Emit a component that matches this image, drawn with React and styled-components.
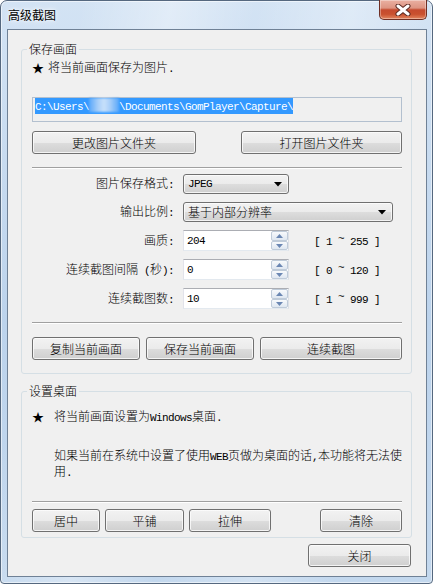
import React from 'react';
import styled, { createGlobalStyle } from 'styled-components';

const Global = createGlobalStyle`
  html, body { margin: 0; padding: 0; background: #ffffff; }
  body {
    font-family: "Noto Sans CJK SC", "Noto Sans", sans-serif;
    font-size: 12px;
    font-weight: 300;
    color: #000;
  }
  * { box-sizing: border-box; }
`;

const Window = styled.div`
  width: 433px;
  height: 584px;
  display: flex;
  flex-direction: column;
  padding: 0 5px 6px 6px;
  border: 1px solid #55687f;
  border-radius: 7px 7px 4px 4px;
  background:
    linear-gradient(100deg, rgba(255,255,255,0) 15%, rgba(255,255,255,0.35) 32%, rgba(255,255,255,0) 48%, rgba(255,255,255,0.28) 66%, rgba(255,255,255,0) 82%),
    linear-gradient(180deg, #d3e3f4 0%, #bcd3ec 55%, #c3d8ee 100%);
  box-shadow: inset 0 0 0 1px rgba(255,255,255,0.55);
`;

const TitleBar = styled.div`
  height: 28px;
  display: flex;
  align-items: flex-start;
`;

const Title = styled.span`
  margin: 7px 0 0 1px;
  line-height: 13px;
  font-size: 12px;
  font-weight: 400;
  text-shadow: 0 0 6px rgba(255,255,255,0.95), 0 0 3px rgba(255,255,255,0.9);
`;

const CloseButton = styled.div`
  margin: -1px 0 0 auto;
  width: 48px;
  height: 20px;
  display: flex;
  align-items: center;
  justify-content: center;
  border: 1px solid #6e2f24;
  border-top: none;
  border-radius: 0 0 5px 5px;
  background: linear-gradient(180deg, #eab0a2 0%, #dd9482 42%, #c54b2f 52%, #c9512f 75%, #e28660 100%);
  box-shadow: inset 0 0 0 1px rgba(255,255,255,0.35);
`;

const Client = styled.div`
  flex: 1;
  display: flex;
  flex-direction: column;
  padding: 13px 14px 0 13px;
  border: 1px solid #6f8196;
  background: #f0f0f0;
`;

const Group = styled.fieldset`
  margin: ${p => p.$mt || 0}px 0 0 0;
  padding: 0;
  border: 1px solid #d5dfe5;
  border-radius: 3px;
  min-width: 0;
`;

const Legend = styled.legend`
  margin-left: 5px;
  padding: 0 2px;
  line-height: 12px;
  font-size: 12px;
`;

const GroupBody = styled.div`
  display: flex;
  flex-direction: column;
  padding: ${p => p.$pt}px 9px ${p => p.$pb}px 10px;
`;

const Lt = styled.span`
  font-family: "Liberation Mono", monospace;
  font-size: 11px;
  font-weight: 400;
  letter-spacing: -0.6px;
`;

const StarRow = styled.div`
  display: flex;
  align-items: center;
  height: 12px;
  line-height: 12px;
  gap: ${p => p.$gap}px;
`;

const Star = styled.span`
  font-size: 12px;
  width: 12px;
  text-align: center;
`;

const PathBox = styled.div`
  margin-top: 23px;
  height: 25px;
  padding: 0 2px;
  border: 1px solid #b3c0cf;
  background: #f0f0f0;
  line-height: 14px;
`;

const Selection = styled.span`
  display: inline-block;
  background: #3399ff;
  color: #fff;
  line-height: 14px;
  white-space: nowrap;
`;

const Blurred = styled.span`
  display: inline-block;
  width: 30px;
  height: 14px;
  vertical-align: top;
  background: linear-gradient(90deg, #59a7fa 0%, #a8cff9 30%, #c9e1fb 50%, #a8cff9 70%, #59a7fa 100%);
  filter: blur(0.8px);
`;

const ButtonRow = styled.div`
  display: flex;
  margin-top: ${p => p.$mt}px;
  gap: ${p => p.$gap || 0}px;
  justify-content: ${p => p.$justify || 'flex-start'};
`;

const Button = styled.button`
  width: ${p => (p.$w ? `${p.$w}px` : 'auto')};
  flex: ${p => (p.$grow ? 1 : 'none')};
  margin-left: ${p => (p.$push ? 'auto' : '0')};
  margin-right: ${p => p.$mr || 0}px;
  height: 23px;
  padding: 0;
  font-family: "Noto Sans CJK SC", sans-serif;
  font-size: 12px;
  font-weight: 300;
  line-height: 12px;
  color: #000;
  border: 1px solid #707070;
  border-radius: 3px;
  background: linear-gradient(180deg, #f2f2f2 0%, #ebebeb 50%, #dddddd 51%, #cfcfcf 100%);
  box-shadow: inset 0 0 0 1px rgba(252,252,252,0.8);
`;

const Separator = styled.div`
  margin-top: ${p => p.$mt}px;
  height: 2px;
  border-top: 1px solid #a0a0a0;
  border-bottom: 1px solid #ffffff;
`;

const Form = styled.div`
  margin-top: 5px;
  display: flex;
  flex-direction: column;
  gap: 8px;
`;

const FormRow = styled.div`
  display: flex;
  align-items: center;
`;

const FieldLabel = styled.span`
  width: 142px;
  margin-right: 9px;
  text-align: right;
  white-space: nowrap;
  line-height: 12px;
`;

const Combo = styled.div`
  width: ${p => p.$w}px;
  height: 20px;
  display: flex;
  align-items: center;
  justify-content: space-between;
  padding: 0 6px 0 4px;
  border: 1px solid #707070;
  border-radius: 3px;
  background: linear-gradient(180deg, #f2f2f2 0%, #ebebeb 50%, #dddddd 51%, #cfcfcf 100%);
  box-shadow: inset 0 0 0 1px rgba(252,252,252,0.8);
  line-height: 12px;
`;

const SpinEdit = styled.div`
  width: 106px;
  height: 21px;
  display: flex;
  border: 1px solid;
  border-color: #abadb3 #dbdfe6 #e3e9ef #e2e3ea;
  background: #ffffff;
`;

const SpinValue = styled.span`
  flex: 1;
  padding: 2px 0 0 3px;
  line-height: 12px;
`;

const SpinButtons = styled.div`
  width: 17px;
  display: flex;
  flex-direction: column;
`;

const SpinHalf = styled.div`
  height: ${p => p.$h}px;
  display: flex;
  align-items: center;
  justify-content: center;
  border: 1px solid #bfcbd9;
  border-radius: 2px;
  background: linear-gradient(180deg, #f8fafc 0%, #ebf0f6 50%, #dfe7f1 100%);
`;

const RangeText = styled.span`
  margin-left: 25px;
  line-height: 12px;
`;

const Tilde = styled.span`
  vertical-align: 3px;
`;

const Paragraph = styled.p`
  margin: 25px 0 0 22px;
  width: 352px;
  line-height: 14px;
`;

const CloseRow = styled.div`
  display: flex;
  justify-content: flex-end;
  margin-top: 6px;
`;

const Arrow = () => (
  <svg width="8" height="5" viewBox="0 0 8 5">
    <polygon points="0,0 8,0 4,4.5" fill="#000" />
  </svg>
);

const SpinArrow = ({ up }) => (
  <svg width="7" height="4" viewBox="0 0 7 4">
    <polygon points={up ? '0,4 7,4 3.5,0' : '0,0 7,0 3.5,4'} fill="#6b87b3" />
  </svg>
);

const CloseX = () => (
  <svg width="16" height="12" viewBox="0 0 16 12">
    <path d="M3 2 L13 10 M13 2 L3 10" stroke="#5a2a22" strokeWidth="5" strokeLinecap="round" />
    <path d="M3 2 L13 10 M13 2 L3 10" stroke="#ffffff" strokeWidth="3" strokeLinecap="round" />
  </svg>
);

const Colon = () => <Lt>:</Lt>;

const Spin = ({ value }) => (
  <SpinEdit>
    <SpinValue><Lt>{value}</Lt></SpinValue>
    <SpinButtons>
      <SpinHalf $h={10}><SpinArrow up /></SpinHalf>
      <SpinHalf $h={9}><SpinArrow /></SpinHalf>
    </SpinButtons>
  </SpinEdit>
);

const Range = ({ from, to }) => (
  <RangeText>
    <Lt>[ {from} <Tilde>~</Tilde> {to} ]</Lt>
  </RangeText>
);

export default function App() {
  return (
    <>
      <Global />
      <Window>
        <TitleBar>
          <Title>高级截图</Title>
          <CloseButton><CloseX /></CloseButton>
        </TitleBar>
        <Client>
          <Group>
            <Legend>保存画面</Legend>
            <GroupBody $pt={7} $pb={13}>
              <StarRow $gap={4}>
                <Star>★</Star>
                <span>将当前画面保存为图片<Lt>.</Lt></span>
              </StarRow>
              <PathBox>
                <Selection>
                  <Lt>C:\Users\</Lt>
                  <Blurred />
                  <Lt>\Documents\GomPlayer\Capture\</Lt>
                </Selection>
              </PathBox>
              <ButtonRow $mt={9} $justify="space-between">
                <Button $w={164}>更改图片文件夹</Button>
                <Button $w={161}>打开图片文件夹</Button>
              </ButtonRow>
              <Separator $mt={13} />
              <Form>
                <FormRow>
                  <FieldLabel>图片保存格式<Colon /></FieldLabel>
                  <Combo $w={106}><Lt>JPEG</Lt><Arrow /></Combo>
                </FormRow>
                <FormRow>
                  <FieldLabel>输出比例<Colon /></FieldLabel>
                  <Combo $w={210}><span>基于内部分辨率</span><Arrow /></Combo>
                </FormRow>
                <FormRow>
                  <FieldLabel>画质<Colon /></FieldLabel>
                  <Spin value="204" />
                  <Range from="1" to="255" />
                </FormRow>
                <FormRow>
                  <FieldLabel>连续截图间隔<Lt> (</Lt>秒<Lt>):</Lt></FieldLabel>
                  <Spin value="0" />
                  <Range from="0" to="120" />
                </FormRow>
                <FormRow>
                  <FieldLabel>连续截图数<Colon /></FieldLabel>
                  <Spin value="10" />
                  <Range from="1" to="999" />
                </FormRow>
              </Form>
              <Separator $mt={13} />
              <ButtonRow $mt={13} $gap={6}>
                <Button $w={108}>复制当前画面</Button>
                <Button $w={108}>保存当前画面</Button>
                <Button $grow>连续截图</Button>
              </ButtonRow>
            </GroupBody>
          </Group>
          <Group $mt={11}>
            <Legend>设置桌面</Legend>
            <GroupBody $pt={14} $pb={5}>
              <StarRow $gap={10}>
                <Star>★</Star>
                <span>将当前画面设置为<Lt>Windows</Lt>桌面<Lt>.</Lt></span>
              </StarRow>
              <Paragraph>
                如果当前在系统中设置了使用<Lt>WEB</Lt>页做为桌面的话<Lt>,</Lt>本功能将无法使用<Lt>.</Lt>
              </Paragraph>
              <Separator $mt={21} />
              <ButtonRow $mt={6} $gap={5}>
                <Button $w={68}>居中</Button>
                <Button $w={79}>平铺</Button>
                <Button $w={82}>拉伸</Button>
                <Button $w={82} $push>清除</Button>
              </ButtonRow>
            </GroupBody>
          </Group>
          <CloseRow>
            <Button $w={103} $mr={1}>关闭</Button>
          </CloseRow>
        </Client>
      </Window>
    </>
  );
}
